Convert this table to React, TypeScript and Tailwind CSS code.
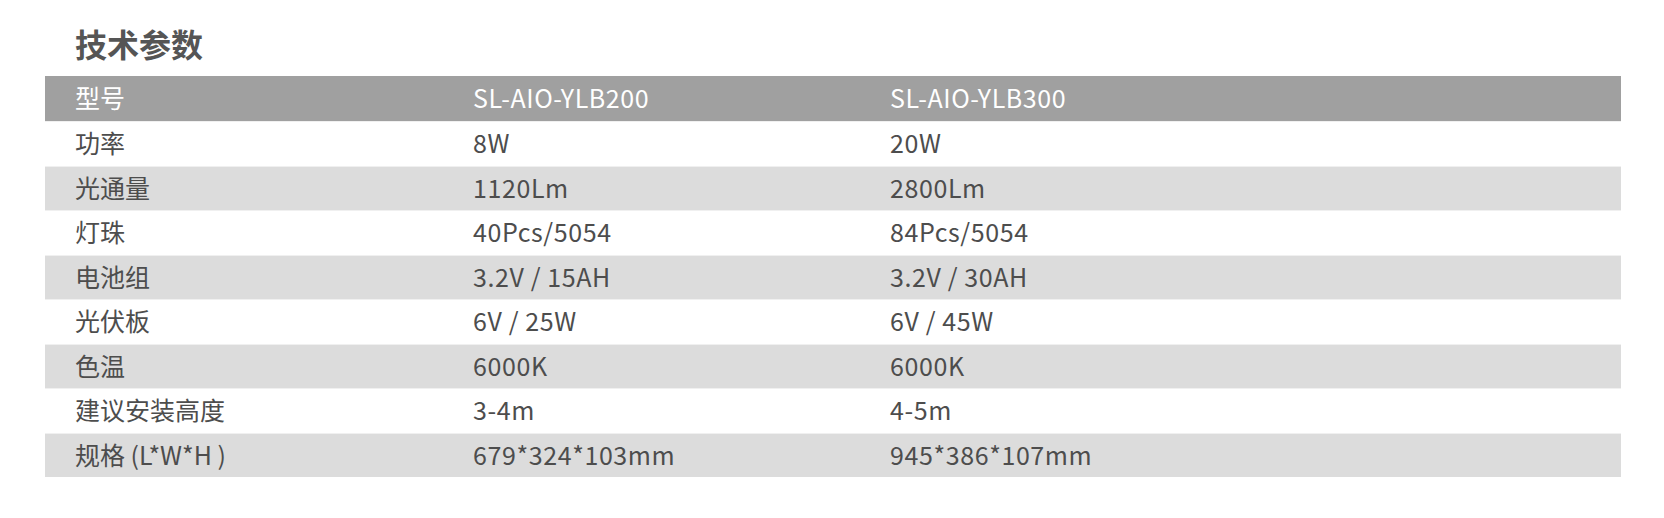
const font = { fontFamily: '"Noto Sans CJK SC", "Noto Sans", sans-serif' };

const specs: [string, string, string][] = [
  ['功率', '8W', '20W'],
  ['光通量', '1120Lm', '2800Lm'],
  ['灯珠', '40Pcs/5054', '84Pcs/5054'],
  ['电池组', '3.2V / 15AH', '3.2V / 30AH'],
  ['光伏板', '6V / 25W', '6V / 45W'],
  ['色温', '6000K', '6000K'],
  ['建议安装高度', '3-4m', '4-5m'],
  ['规格 (L*W*H )', '679*324*103mm', '945*386*107mm'],
];

export default function App() {
  return (
    <div className="w-[1664px] h-[518px] bg-white pt-[24px]" style={font}>
      <h2 className="ml-[75px] text-[32px] leading-[38px] font-bold text-[#555555] mb-[14px]">技术参数</h2>

      <div className="ml-[45px] w-[1576px]">
        <div className="grid grid-cols-[428px_417px_1fr] items-center h-[45px] pb-[3px] bg-[#a0a0a0] text-white text-[25px] leading-[30px]">
          <span className="pl-[30px]">型号</span>
          <span className="tracking-[0.6px]">SL-AIO-YLB200</span>
          <span className="tracking-[0.6px]">SL-AIO-YLB300</span>
        </div>

        {specs.map(([label, a, b], i) => (
          <div
            key={label}
            className={`grid grid-cols-[428px_417px_1fr] items-center h-[44.5px] pb-[3px] text-[25px] leading-[30px] text-[#4d4d4d] border-t border-[#f0f0f0] ${
              i % 2 === 1 ? 'bg-[#dcdcdc]' : 'bg-white'
            }`}
          >
            <span className="pl-[30px]">{label}</span>
            <span className="tracking-[0.6px]">{a}</span>
            <span className="tracking-[0.6px]">{b}</span>
          </div>
        ))}
      </div>
    </div>
  );
}
